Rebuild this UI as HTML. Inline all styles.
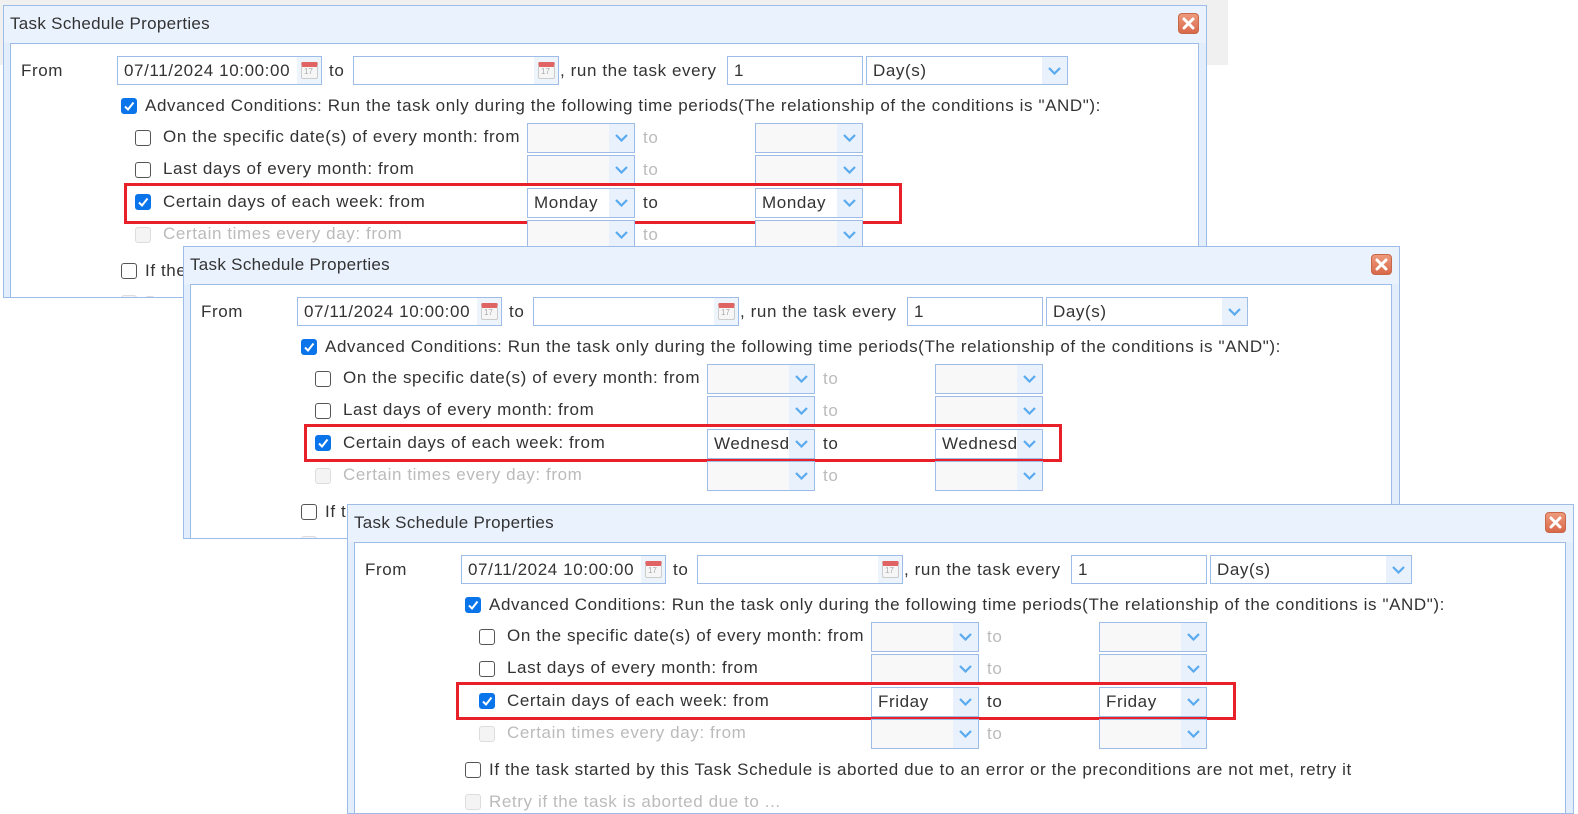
<!DOCTYPE html>
<html><head><meta charset="utf-8"><style>
*{box-sizing:border-box;margin:0;padding:0}
body{width:1578px;height:803px;position:relative;overflow:hidden;background:#fff;font-family:"Liberation Sans","Noto Sans CJK SC",sans-serif;font-size:17px;letter-spacing:0.6px;color:#333}
.dlg{position:absolute;background:#e3eefc;border:1px solid #9dbde8;overflow:hidden}
.tb{position:absolute;left:0;top:0;right:0;height:37px;background:#eaf2fe}
.tt{position:absolute;left:6px;top:8px;font-size:17px;color:#333;letter-spacing:.3px}
.cl{position:absolute;right:7px;top:7px;width:21px;height:21px;border-radius:4px;background:linear-gradient(#ee9a7c,#d8694a);border:1px solid #c86848}
.cl svg{position:absolute;left:3px;top:3px}
.in{position:absolute;left:6px;top:37px;right:7px;bottom:-2px;background:#fff;border:1px solid #9dbde8}
.a{position:absolute;white-space:nowrap;line-height:20px}
.f{position:absolute;height:29px;border:1px solid #9dbde8;background:#fff;line-height:27px;padding-left:6px;overflow:hidden;white-space:nowrap}
.cal{position:absolute;right:0;top:0;width:24px;height:27px;background:#eef4fc}
.cal i{position:absolute;left:4px;top:5px;width:17px;height:17px;background:#f6f6f6;border:1px solid #ccc;border-top:5px solid #e06464;border-radius:2px}
.cal b{position:absolute;left:7px;top:10px;font-size:8px;color:#aaa;font-weight:normal;line-height:10px;letter-spacing:0}
.sel{position:absolute;height:30px;border:1px solid #9dbde8;background:#fff;line-height:28px;padding-left:6px;overflow:hidden;white-space:nowrap}
.sel.d{background:#f8f8f8}
.sel .ar{position:absolute;right:0;top:0;width:25px;height:28px;background:#e8f1fc}
.sel .ar svg{position:absolute;left:6px;top:10px}
.cb{position:absolute;width:16px;height:16px;border:1.5px solid #555;border-radius:3px;background:#fff}
.cb.c{background:#0a74ea;border-color:#0a74ea}
.cb.c svg{position:absolute;left:1px;top:1px}
.cb.x{border-color:#ddd;background:#f4f4f4}
.g{color:#bbb}
.red{position:absolute;border:3px solid #e8202a}
</style></head><body>
<div style="position:absolute;left:0;top:0;width:1228px;height:65px;background:#f0f0f0"></div>

<div class="dlg" style="left:3px;top:5px;width:1204px;height:293px">
<div class="tb"></div><div class="tt">Task Schedule Properties</div>
<div class="cl"><svg width="13" height="13"><path d="M2 2L11 11M11 2L2 11" stroke="#fff" stroke-width="3" stroke-linecap="round"/></svg></div>
<div class="in"></div>
<div class="a" style="left:17px;top:55px">From</div>
<div class="f" style="left:113px;top:50px;width:205px">07/11/2024 10:00:00<span class="cal"><i></i><b>17</b></span></div>
<div class="a" style="left:325px;top:55px">to</div>
<div class="f" style="left:349px;top:50px;width:206px"><span class="cal"><i></i><b>17</b></span></div>
<div class="a" style="left:556px;top:55px">, run the task every</div>
<div class="f" style="left:723px;top:50px;width:136px">1</div>
<div class="sel" style="left:862px;top:50px;width:202px;height:29px">Day(s)<span class="ar"><svg width="13" height="8"><path d="M1 1L6.5 6.5L12 1" stroke="#5aaaf0" stroke-width="2.2" fill="none"/></svg></span></div>
<div class="cb c" style="left:117px;top:92px"><svg width="12" height="12"><path d="M2 6.5L5 9.5L10.5 2.5" stroke="#fff" stroke-width="2" fill="none"/></svg></div>
<div class="a" style="left:141px;top:90px">Advanced Conditions: Run the task only during the following time periods(The relationship of the conditions is "AND"):</div>
<div class="cb" style="left:131px;top:124px"></div><div class="a" style="left:159px;top:121px">On the specific date(s) of every month: from</div>
<div class="sel d" style="left:523px;top:117px;width:108px"><span class="ar"><svg width="13" height="8"><path d="M1 1L6.5 6.5L12 1" stroke="#5aaaf0" stroke-width="2.2" fill="none"/></svg></span></div>
<div class="a g" style="left:639px;top:122px">to</div>
<div class="sel d" style="left:751px;top:117px;width:108px"><span class="ar"><svg width="13" height="8"><path d="M1 1L6.5 6.5L12 1" stroke="#5aaaf0" stroke-width="2.2" fill="none"/></svg></span></div>
<div class="cb" style="left:131px;top:156px"></div><div class="a" style="left:159px;top:153px">Last days of every month: from</div>
<div class="sel d" style="left:523px;top:149px;width:108px"><span class="ar"><svg width="13" height="8"><path d="M1 1L6.5 6.5L12 1" stroke="#5aaaf0" stroke-width="2.2" fill="none"/></svg></span></div>
<div class="a g" style="left:639px;top:154px">to</div>
<div class="sel d" style="left:751px;top:149px;width:108px"><span class="ar"><svg width="13" height="8"><path d="M1 1L6.5 6.5L12 1" stroke="#5aaaf0" stroke-width="2.2" fill="none"/></svg></span></div>
<div class="red" style="left:120px;top:177px;width:778px;height:41px"></div>
<div class="cb c" style="left:131px;top:188px"><svg width="12" height="12"><path d="M2 6.5L5 9.5L10.5 2.5" stroke="#fff" stroke-width="2" fill="none"/></svg></div><div class="a" style="left:159px;top:186px">Certain days of each week: from</div>
<div class="sel" style="left:523px;top:182px;width:108px">Monday<span class="ar"><svg width="13" height="8"><path d="M1 1L6.5 6.5L12 1" stroke="#5aaaf0" stroke-width="2.2" fill="none"/></svg></span></div>
<div class="a" style="left:639px;top:187px">to</div>
<div class="sel" style="left:751px;top:182px;width:108px">Monday<span class="ar"><svg width="13" height="8"><path d="M1 1L6.5 6.5L12 1" stroke="#5aaaf0" stroke-width="2.2" fill="none"/></svg></span></div>
<div class="cb x" style="left:131px;top:221px"></div><div class="a g" style="left:159px;top:218px">Certain times every day: from</div>
<div class="sel d" style="left:523px;top:214px;width:108px"><span class="ar"><svg width="13" height="8"><path d="M1 1L6.5 6.5L12 1" stroke="#5aaaf0" stroke-width="2.2" fill="none"/></svg></span></div>
<div class="a g" style="left:639px;top:219px">to</div>
<div class="sel d" style="left:751px;top:214px;width:108px"><span class="ar"><svg width="13" height="8"><path d="M1 1L6.5 6.5L12 1" stroke="#5aaaf0" stroke-width="2.2" fill="none"/></svg></span></div>
<div class="cb" style="left:117px;top:257px"></div><div class="a" style="left:141px;top:255px">If the task started by this Task Schedule is aborted due to an error or the preconditions are not met, retry it</div>
<div class="cb x" style="left:117px;top:289px"></div><div class="a g" style="left:141px;top:287px">Retry if the task is aborted due to ...</div>
</div>

<div class="dlg" style="left:183px;top:246px;width:1217px;height:293px">
<div class="tb"></div><div class="tt">Task Schedule Properties</div>
<div class="cl"><svg width="13" height="13"><path d="M2 2L11 11M11 2L2 11" stroke="#fff" stroke-width="3" stroke-linecap="round"/></svg></div>
<div class="in"></div>
<div class="a" style="left:17px;top:55px">From</div>
<div class="f" style="left:113px;top:50px;width:205px">07/11/2024 10:00:00<span class="cal"><i></i><b>17</b></span></div>
<div class="a" style="left:325px;top:55px">to</div>
<div class="f" style="left:349px;top:50px;width:206px"><span class="cal"><i></i><b>17</b></span></div>
<div class="a" style="left:556px;top:55px">, run the task every</div>
<div class="f" style="left:723px;top:50px;width:136px">1</div>
<div class="sel" style="left:862px;top:50px;width:202px;height:29px">Day(s)<span class="ar"><svg width="13" height="8"><path d="M1 1L6.5 6.5L12 1" stroke="#5aaaf0" stroke-width="2.2" fill="none"/></svg></span></div>
<div class="cb c" style="left:117px;top:92px"><svg width="12" height="12"><path d="M2 6.5L5 9.5L10.5 2.5" stroke="#fff" stroke-width="2" fill="none"/></svg></div>
<div class="a" style="left:141px;top:90px">Advanced Conditions: Run the task only during the following time periods(The relationship of the conditions is "AND"):</div>
<div class="cb" style="left:131px;top:124px"></div><div class="a" style="left:159px;top:121px">On the specific date(s) of every month: from</div>
<div class="sel d" style="left:523px;top:117px;width:108px"><span class="ar"><svg width="13" height="8"><path d="M1 1L6.5 6.5L12 1" stroke="#5aaaf0" stroke-width="2.2" fill="none"/></svg></span></div>
<div class="a g" style="left:639px;top:122px">to</div>
<div class="sel d" style="left:751px;top:117px;width:108px"><span class="ar"><svg width="13" height="8"><path d="M1 1L6.5 6.5L12 1" stroke="#5aaaf0" stroke-width="2.2" fill="none"/></svg></span></div>
<div class="cb" style="left:131px;top:156px"></div><div class="a" style="left:159px;top:153px">Last days of every month: from</div>
<div class="sel d" style="left:523px;top:149px;width:108px"><span class="ar"><svg width="13" height="8"><path d="M1 1L6.5 6.5L12 1" stroke="#5aaaf0" stroke-width="2.2" fill="none"/></svg></span></div>
<div class="a g" style="left:639px;top:154px">to</div>
<div class="sel d" style="left:751px;top:149px;width:108px"><span class="ar"><svg width="13" height="8"><path d="M1 1L6.5 6.5L12 1" stroke="#5aaaf0" stroke-width="2.2" fill="none"/></svg></span></div>
<div class="red" style="left:120px;top:177px;width:758px;height:38px"></div>
<div class="cb c" style="left:131px;top:188px"><svg width="12" height="12"><path d="M2 6.5L5 9.5L10.5 2.5" stroke="#fff" stroke-width="2" fill="none"/></svg></div><div class="a" style="left:159px;top:186px">Certain days of each week: from</div>
<div class="sel" style="left:523px;top:182px;width:108px">Wednesday<span class="ar"><svg width="13" height="8"><path d="M1 1L6.5 6.5L12 1" stroke="#5aaaf0" stroke-width="2.2" fill="none"/></svg></span></div>
<div class="a" style="left:639px;top:187px">to</div>
<div class="sel" style="left:751px;top:182px;width:108px">Wednesday<span class="ar"><svg width="13" height="8"><path d="M1 1L6.5 6.5L12 1" stroke="#5aaaf0" stroke-width="2.2" fill="none"/></svg></span></div>
<div class="cb x" style="left:131px;top:221px"></div><div class="a g" style="left:159px;top:218px">Certain times every day: from</div>
<div class="sel d" style="left:523px;top:214px;width:108px"><span class="ar"><svg width="13" height="8"><path d="M1 1L6.5 6.5L12 1" stroke="#5aaaf0" stroke-width="2.2" fill="none"/></svg></span></div>
<div class="a g" style="left:639px;top:219px">to</div>
<div class="sel d" style="left:751px;top:214px;width:108px"><span class="ar"><svg width="13" height="8"><path d="M1 1L6.5 6.5L12 1" stroke="#5aaaf0" stroke-width="2.2" fill="none"/></svg></span></div>
<div class="cb" style="left:117px;top:257px"></div><div class="a" style="left:141px;top:255px">If the task started by this Task Schedule is aborted due to an error or the preconditions are not met, retry it</div>
<div class="cb x" style="left:117px;top:289px"></div>
</div>

<div class="dlg" style="left:347px;top:504px;width:1227px;height:310px">
<div class="tb"></div><div class="tt">Task Schedule Properties</div>
<div class="cl"><svg width="13" height="13"><path d="M2 2L11 11M11 2L2 11" stroke="#fff" stroke-width="3" stroke-linecap="round"/></svg></div>
<div class="in"></div>
<div class="a" style="left:17px;top:55px">From</div>
<div class="f" style="left:113px;top:50px;width:205px">07/11/2024 10:00:00<span class="cal"><i></i><b>17</b></span></div>
<div class="a" style="left:325px;top:55px">to</div>
<div class="f" style="left:349px;top:50px;width:206px"><span class="cal"><i></i><b>17</b></span></div>
<div class="a" style="left:556px;top:55px">, run the task every</div>
<div class="f" style="left:723px;top:50px;width:136px">1</div>
<div class="sel" style="left:862px;top:50px;width:202px;height:29px">Day(s)<span class="ar"><svg width="13" height="8"><path d="M1 1L6.5 6.5L12 1" stroke="#5aaaf0" stroke-width="2.2" fill="none"/></svg></span></div>
<div class="cb c" style="left:117px;top:92px"><svg width="12" height="12"><path d="M2 6.5L5 9.5L10.5 2.5" stroke="#fff" stroke-width="2" fill="none"/></svg></div>
<div class="a" style="left:141px;top:90px">Advanced Conditions: Run the task only during the following time periods(The relationship of the conditions is "AND"):</div>
<div class="cb" style="left:131px;top:124px"></div><div class="a" style="left:159px;top:121px">On the specific date(s) of every month: from</div>
<div class="sel d" style="left:523px;top:117px;width:108px"><span class="ar"><svg width="13" height="8"><path d="M1 1L6.5 6.5L12 1" stroke="#5aaaf0" stroke-width="2.2" fill="none"/></svg></span></div>
<div class="a g" style="left:639px;top:122px">to</div>
<div class="sel d" style="left:751px;top:117px;width:108px"><span class="ar"><svg width="13" height="8"><path d="M1 1L6.5 6.5L12 1" stroke="#5aaaf0" stroke-width="2.2" fill="none"/></svg></span></div>
<div class="cb" style="left:131px;top:156px"></div><div class="a" style="left:159px;top:153px">Last days of every month: from</div>
<div class="sel d" style="left:523px;top:149px;width:108px"><span class="ar"><svg width="13" height="8"><path d="M1 1L6.5 6.5L12 1" stroke="#5aaaf0" stroke-width="2.2" fill="none"/></svg></span></div>
<div class="a g" style="left:639px;top:154px">to</div>
<div class="sel d" style="left:751px;top:149px;width:108px"><span class="ar"><svg width="13" height="8"><path d="M1 1L6.5 6.5L12 1" stroke="#5aaaf0" stroke-width="2.2" fill="none"/></svg></span></div>
<div class="red" style="left:108px;top:177px;width:780px;height:38px"></div>
<div class="cb c" style="left:131px;top:188px"><svg width="12" height="12"><path d="M2 6.5L5 9.5L10.5 2.5" stroke="#fff" stroke-width="2" fill="none"/></svg></div><div class="a" style="left:159px;top:186px">Certain days of each week: from</div>
<div class="sel" style="left:523px;top:182px;width:108px">Friday<span class="ar"><svg width="13" height="8"><path d="M1 1L6.5 6.5L12 1" stroke="#5aaaf0" stroke-width="2.2" fill="none"/></svg></span></div>
<div class="a" style="left:639px;top:187px">to</div>
<div class="sel" style="left:751px;top:182px;width:108px">Friday<span class="ar"><svg width="13" height="8"><path d="M1 1L6.5 6.5L12 1" stroke="#5aaaf0" stroke-width="2.2" fill="none"/></svg></span></div>
<div class="cb x" style="left:131px;top:221px"></div><div class="a g" style="left:159px;top:218px">Certain times every day: from</div>
<div class="sel d" style="left:523px;top:214px;width:108px"><span class="ar"><svg width="13" height="8"><path d="M1 1L6.5 6.5L12 1" stroke="#5aaaf0" stroke-width="2.2" fill="none"/></svg></span></div>
<div class="a g" style="left:639px;top:219px">to</div>
<div class="sel d" style="left:751px;top:214px;width:108px"><span class="ar"><svg width="13" height="8"><path d="M1 1L6.5 6.5L12 1" stroke="#5aaaf0" stroke-width="2.2" fill="none"/></svg></span></div>
<div class="cb" style="left:117px;top:257px"></div><div class="a" style="left:141px;top:255px">If the task started by this Task Schedule is aborted due to an error or the preconditions are not met, retry it</div>
<div class="cb x" style="left:117px;top:289px"></div><div class="a g" style="left:141px;top:287px">Retry if the task is aborted due to ...</div>
</div>
</body></html>
